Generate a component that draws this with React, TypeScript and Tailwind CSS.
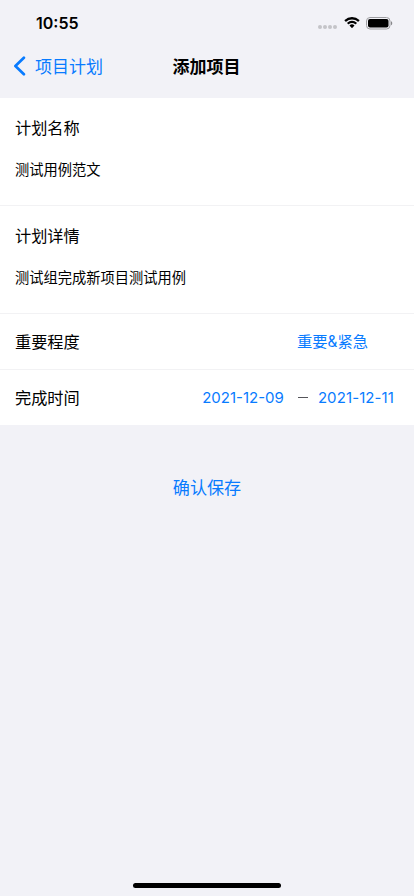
const DOTS = [0, 1, 2, 3];

function StatusIcons() {
  return (
    <div className="flex items-center">
      <div className="mt-[7px] flex gap-[1px]">
        {DOTS.map((dot) => (
          <span key={dot} className="size-1 rounded-full bg-[#c4c4c8]" />
        ))}
      </div>
      <svg className="ml-[7px]" width="16" height="12" viewBox="0 0 16 12" fill="black">
        <path d="M8 2.4c2.2 0 4.3.85 5.9 2.3.1.1.3.1.4 0l1.15-1.15a.3.3 0 0 0 0-.45 10.8 10.8 0 0 0-14.9 0 .3.3 0 0 0 0 .45L1.7 4.7c.1.1.3.1.4 0A8.6 8.6 0 0 1 8 2.4z" />
        <path d="M8 6.1c1.2 0 2.35.45 3.25 1.25.1.1.3.1.4 0l1.15-1.15a.3.3 0 0 0 0-.45 7 7 0 0 0-9.6 0 .3.3 0 0 0 0 .45l1.15 1.15c.1.1.3.1.4 0A4.9 4.9 0 0 1 8 6.1z" />
        <path d="M10.3 8.8a.3.3 0 0 0 0-.45 3.5 3.5 0 0 0-4.6 0 .3.3 0 0 0 0 .45l2.1 2.1c.1.1.3.1.4 0z" />
      </svg>
      <svg className="ml-[6px]" width="27" height="13" viewBox="0 0 27 13">
        <rect x="0.5" y="0.5" width="23.5" height="11.5" rx="3.5" fill="none" stroke="#9d9da1" />
        <rect x="2" y="2" width="20.5" height="8.5" rx="2" fill="black" />
        <path d="M25.1 4.3v4c.7-.3 1.1-1.1 1.1-2s-.4-1.7-1.1-2z" fill="#77777b" />
      </svg>
    </div>
  );
}

export default function App() {
  return (
    <div className="flex h-[896px] w-[414px] flex-col bg-[#f2f2f7] font-['Inter','Noto_Sans_CJK_SC',sans-serif] text-black">
      <div className="flex h-[44px] items-center justify-between pt-[2px] pr-[21px] pl-9">
        <span className="text-[16px] font-semibold">10:55</span>
        <StatusIcons />
      </div>

      <header className="grid h-[54px] grid-cols-3 items-center pb-[8px]">
        <button className="flex items-center gap-[9px] pl-[13px] text-[17px] text-[#087bff]">
          <svg className="mb-px" width="13" height="21" viewBox="0 0 13 21" fill="none" stroke="currentColor" strokeWidth="2.7" strokeLinecap="round" strokeLinejoin="round">
            <path d="M10.9 1.8L2.4 10L10.9 18.2" />
          </svg>
          <span className="pt-px">项目计划</span>
        </button>
        <h1 className="pt-px pr-px text-center text-[17px] font-semibold">添加项目</h1>
      </header>

      <main className="divide-y divide-[#f2f2f4] bg-white">
        <section className="h-[108px] px-[15px] pt-[18px]">
          <h2 className="text-[16.2px] leading-6">计划名称</h2>
          <p className="mt-5 text-[14.25px] leading-5">测试用例范文</p>
        </section>
        <section className="h-[108px] px-[15px] pt-[18px]">
          <h2 className="text-[16.2px] leading-6">计划详情</h2>
          <p className="mt-5 text-[14.25px] leading-5">测试组完成新项目测试用例</p>
        </section>
        <div className="flex h-[56px] items-center justify-between pr-[46px] pl-[15px]">
          <h2 className="pt-[2px] text-[16.2px]">重要程度</h2>
          <span className="pt-[2px] text-[15.3px] text-[#087bff]">重要&amp;紧急</span>
        </div>
        <div className="flex h-[55px] items-center justify-between pr-5 pl-[15px]">
          <h2 className="pt-[2px] text-[16.2px]">完成时间</h2>
          <div className="flex items-center pt-[2px] text-[15px] text-[#087bff]">
            <span>2021-12-09</span>
            <span className="mr-[10px] mb-[2px] ml-[14px] h-px w-[10px] bg-[#55555a]" />
            <span className="tracking-[0.1px]">2021-12-11</span>
          </div>
        </div>
      </main>

      <button className="mx-auto mt-[50px] text-[17.1px] leading-[26px] text-[#087bff]">确认保存</button>

      <div className="mx-auto mt-auto mb-2 h-[5px] w-[148px] rounded-full bg-black" />
    </div>
  );
}
